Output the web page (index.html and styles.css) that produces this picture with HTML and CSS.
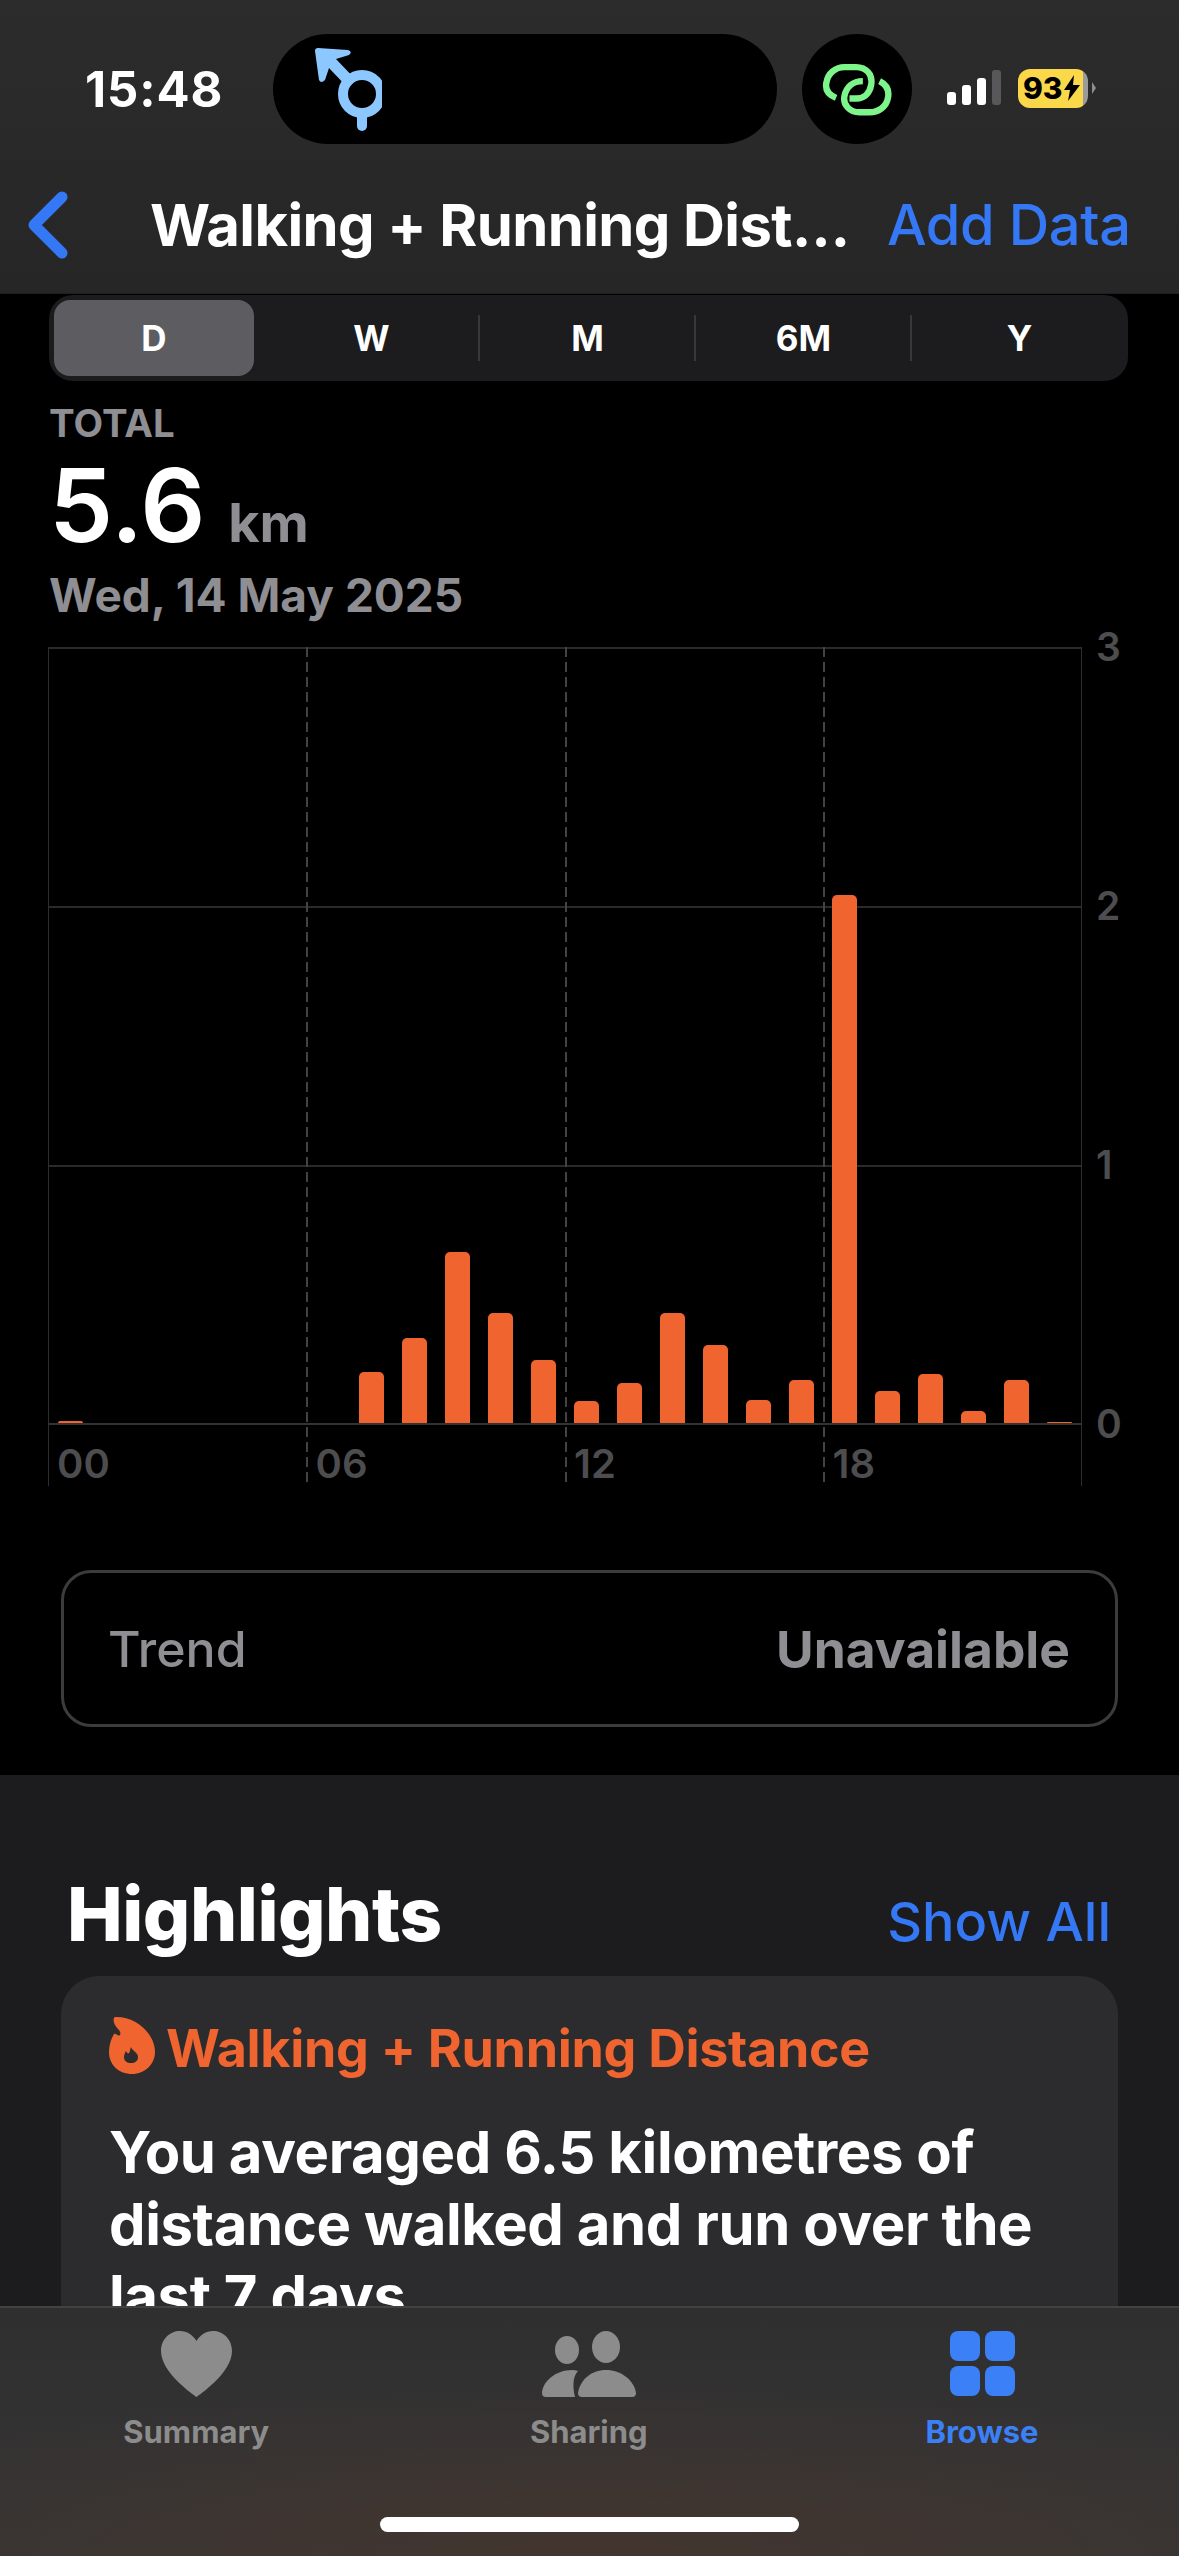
FILE: index.html
```html
<!doctype html>
<html lang="en">
<head>
  <meta charset="UTF-8" />
  <meta name="viewport" content="width=device-width, initial-scale=1.0" />
  <title>Walking + Running Distance</title>
  <link rel="stylesheet" href="styles.css">
</head>
<body>
  <div class="phone">
    <header class="top">
      <div class="status">
        <span class="time">15:48</span>
        <div class="island">
          <svg class="route-icon" width="70" height="100" viewBox="0 0 70 100">
            <path d="M6 2 L36 4 Q41 6 37 9 L24 13 L44 34 L36 42 L17 22 L13 34 Q9 38 7 34 L3 5 Q3 2 6 2Z" fill="#8cc8ff"/>
            <circle cx="50" cy="48" r="19" fill="none" stroke="#8cc8ff" stroke-width="10"/>
            <path d="M50 68 V80" stroke="#8cc8ff" stroke-width="10" stroke-linecap="round"/>
          </svg>
        </div>
        <div class="island-dot">
          <svg width="72" height="57" viewBox="120 120 215 170" fill="none" stroke="#7ef58b" stroke-width="19">
            <path d="M165 230 C140 220 132 205 136 185 C140 155 165 138 190 138 H225 C255 138 275 160 270 190 C266 215 250 232 225 232 H205"/>
            <path d="M295 180 C315 190 325 205 320 230 C315 258 290 273 265 273 H235 C205 273 185 250 190 225 C195 198 215 180 245 180"/>
          </svg>
        </div>
        <div class="signal">
          <span class="b1"></span><span class="b2"></span><span class="b3"></span><span class="b4"></span>
        </div>
        <div class="battery">
          <span>93</span>
          <svg width="16" height="26" viewBox="0 0 16 26"><path d="M10 0 L0 15 H6 L4 26 L16 10 H9 Z" fill="#000"/></svg>
        </div>
        <div class="battery-nub"></div>
      </div>
      <nav class="navbar">
        <svg class="back" width="42" height="68" viewBox="0 0 42 68" fill="none">
          <path d="M35 6 L7 34 L35 62" stroke="#3478f6" stroke-width="11" stroke-linecap="round" stroke-linejoin="round"/>
        </svg>
        <div class="nav-title">Walking + Running Dist…</div>
        <a class="nav-action">Add Data</a>
      </nav>
    </header>

    <main class="chart-area">
      <div class="seg">
        <div class="seg-item active">D</div>
        <div class="seg-item">W</div>
        <div class="seg-item sep">M</div>
        <div class="seg-item sep">6M</div>
        <div class="seg-item sep">Y</div>
      </div>

      <section class="summary">
        <div class="total-label">TOTAL</div>
        <div class="total-value">5.6 <span class="unit">km</span></div>
        <div class="total-date">Wed, 14 May 2025</div>
      </section>

      <section class="chart">
        <div class="plot">
          <div class="grid-line y3"></div>
          <div class="grid-line y2"></div>
          <div class="grid-line y1"></div>
          <div class="dash x6"></div>
          <div class="dash x12"></div>
          <div class="dash x18"></div>
          <div class="bars">
            <i style="height:2px"></i><i></i><i></i><i></i><i></i><i></i><i></i>
            <i style="height:51px"></i><i style="height:85px"></i><i style="height:171px"></i>
            <i style="height:110px"></i><i style="height:63px"></i><i style="height:22px"></i>
            <i style="height:40px"></i><i style="height:110px"></i><i style="height:78px"></i>
            <i style="height:23px"></i><i style="height:43px"></i><i style="height:528px"></i>
            <i style="height:32px"></i><i style="height:49px"></i><i style="height:12px"></i>
            <i style="height:43px"></i><i style="height:1px"></i>
          </div>
          <span class="y-label l3">3</span>
          <span class="y-label l2">2</span>
          <span class="y-label l1">1</span>
          <span class="y-label l0">0</span>
        </div>
        <div class="x-axis">
          <span>00</span><span>06</span><span>12</span><span>18</span>
        </div>
      </section>

      <section class="trend">
        <span class="trend-name">Trend</span>
        <span class="trend-value">Unavailable</span>
      </section>
    </main>

    <section class="highlights">
      <div class="hl-head">
        <h2>Highlights</h2>
        <a>Show All</a>
      </div>
      <article class="hl-card">
        <div class="hl-title">
          <svg width="46" height="58" viewBox="0 0 46 58">
            <path fill="#f0642f" fill-rule="evenodd" d="M6 1 C3 3 5 9 9 13 C11 15 12 17 11 19 C9 21 7 17 5 18 C2 23 0 29 0 36 C0 49 10 58 23 58 C36 58 46 48 46 36 C46 18 27 0 6 1Z M22 31 C23 35 29 36 29 41 C29 45 26 47 22 47 C18 47 15 45 15 41 C15 39 16 37 17 35 C18 37 19 38 20 37 C21 36 21 33 22 31Z"/>
          </svg>
          <span>Walking + Running Distance</span>
        </div>
        <p>You averaged 6.5 kilometres of distance walked and run over the last 7 days.</p>
      </article>
    </section>

    <footer class="tabbar">
      <div class="tab">
        <svg width="71" height="66" viewBox="0 0 71 66">
          <path fill="#8c8c8c" d="M35.5 66 C33 64 0 42 0 20 C0 8 9 0 19 0 C26 0 32 4 35.5 10 C39 4 45 0 52 0 C62 0 71 8 71 20 C71 42 38 64 35.5 66Z"/>
        </svg>
        <span>Summary</span>
      </div>
      <div class="tab">
        <svg width="94" height="66" viewBox="0 0 94 66">
          <g fill="#8c8c8c">
            <ellipse cx="25" cy="19" rx="12" ry="14"/>
            <ellipse cx="64" cy="16" rx="14" ry="16"/>
            <path d="M4 66 Q0 66 0 62 C1 50 14 39 30 39 Q33 39 36 40 C30 46 31 58 33 66Z"/>
            <path d="M40 66 Q36 66 36 62 C38 49 49 39 64 39 C79 39 92 49 94 62 Q94 66 90 66Z"/>
          </g>
        </svg>
        <span>Sharing</span>
      </div>
      <div class="tab current">
        <div class="tiles"><b></b><b></b><b></b><b></b></div>
        <span>Browse</span>
      </div>
      <div class="home-bar"></div>
    </footer>
  </div>
</body>
</html>
```

FILE: styles.css
```css
* { box-sizing: border-box; }
html, body { margin: 0; padding: 0; background: #000; }
body {
  font-family: Inter, "Liberation Sans", sans-serif;
  color: #fff;
}
.phone {
  position: relative;
  width: 1179px;
  height: 2556px;
  overflow: hidden;
  background: #1c1c1e;
}

/* top bar */
.top {
  height: 294px;
  background: linear-gradient(#2c2c2c, #262627);
  border-bottom: 1px solid #1f1f20;
}
.status { display: flex; align-items: center; height: 178px; }
.time { font-size: 49px; font-weight: 700; width: 273px; padding-left: 85px; letter-spacing: .9px; }
.island {
  width: 504px;
  height: 110px;
  border-radius: 55px;
  background: #000;
  display: flex;
  align-items: center;
}
.route-icon { margin-left: 39px; margin-top: 14px; }
.island-dot {
  width: 110px;
  height: 110px;
  margin-left: 25px;
  border-radius: 50%;
  background: #000;
  display: flex;
  align-items: center;
  justify-content: center;
}
.signal { display: flex; align-items: flex-end; gap: 6px; margin-left: 35px; margin-top: -3px; }
.signal span { width: 9px; border-radius: 3px; background: #fff; }
.signal .b1 { height: 13px; }
.signal .b2 { height: 20px; }
.signal .b3 { height: 27px; }
.signal .b4 { height: 35px; background: #58585a; }
.battery {
  display: flex;
  align-items: center;
  gap: 1px;
  width: 70px;
  height: 39px;
  margin-left: 17px;
  margin-top: -2px;
  padding-left: 5px;
  border-radius: 12px;
  background: linear-gradient(90deg, #fbd84a 93%, #9a9a9a 93%);
  color: #000;
  font-size: 30px;
  font-weight: 800;
}
.battery-nub {
  width: 0;
  height: 0;
  margin-left: 4px;
  margin-top: -2px;
  border-left: 4px solid #8e8e8e;
  border-top: 6px solid transparent;
  border-bottom: 6px solid transparent;
}
.navbar { display: flex; align-items: center; height: 94px; padding-left: 27px; }
.back { flex: none; }
.nav-title {
  width: 737px;
  margin-left: 81px;
  font-size: 58px;
  font-weight: 700;
  letter-spacing: -.6px;
  white-space: nowrap;
}
.nav-action { font-size: 56px; font-weight: 500; color: #3478f6; white-space: nowrap; letter-spacing: -.4px; }

/* black chart section */
.chart-area { background: #000; height: 1481px; padding-top: 1px; }
.seg {
  display: grid;
  grid-template-columns: repeat(5, 216px);
  width: 1079px;
  height: 86px;
  margin-left: 49px;
  border-radius: 24px;
  background: #1c1c1e;
}
.seg-item {
  position: relative;
  display: flex;
  align-items: center;
  justify-content: center;
  margin-left: -3px;
  font-size: 35px;
  font-weight: 700;
}
.seg-item.active {
  width: 200px;
  height: 76px;
  margin: 5px 0 0 5px;
  border-radius: 16px;
  background: #5d5d61;
}
.seg-item.sep::before {
  content: "";
  position: absolute;
  left: 0;
  top: 20px;
  width: 2px;
  height: 46px;
  background: #38383a;
}

.summary { padding: 20px 0 0 49px; }
.total-label { font-size: 38.5px; line-height: 44px; font-weight: 700; color: #8e8e93; }
.total-value { font-size: 102px; line-height: 110px; font-weight: 600; margin-top: 5px; }
.unit { font-size: 54px; font-weight: 700; color: #8e8e93; margin-left: -3px; }
.total-date { font-size: 46px; line-height: 52px; font-weight: 700; color: #8e8e93; margin-top: -9px; }

.chart { margin: 26px 0 0 48px; width: 1034px; }
.plot {
  position: relative;
  height: 778px;
  border-left: 1px solid #2e2e30;
  border-right: 1px solid #2e2e30;
  border-bottom: 2px solid #333335;
}
.grid-line { position: absolute; left: 0; right: 0; height: 2px; background: #2a2a2c; }
.grid-line.y3 { top: 0; }
.grid-line.y2 { top: 259px; }
.grid-line.y1 { top: 518px; }
.dash {
  position: absolute;
  top: 0;
  bottom: -63px;
  width: 2px;
  background: repeating-linear-gradient(#434345 0 10px, transparent 10px 15px);
}
.dash.x6 { left: 257px; }
.dash.x12 { left: 516px; }
.dash.x18 { left: 774px; }
.bars {
  position: absolute;
  inset: 0;
  display: grid;
  grid-template-columns: repeat(24, 1fr);
  align-items: end;
  justify-items: center;
}
.bars i { display: block; width: 25px; background: #f0642f; border-radius: 5px 5px 0 0; }
.y-label {
  position: absolute;
  left: 1047px;
  font-size: 39px;
  line-height: 46px;
  font-weight: 600;
  color: #4d4d4f;
}
.y-label.l3 { top: -23px; }
.y-label.l2 { top: 236px; }
.y-label.l1 { top: 495px; }
.y-label.l0 { top: 754px; }
.x-axis {
  display: grid;
  grid-template-columns: repeat(4, 258.5px);
  height: 61px;
  border-left: 1px solid #2e2e30;
  border-right: 1px solid #2e2e30;
}
.x-axis span { padding: 16px 0 0 8px; font-size: 40px; line-height: 46px; font-weight: 600; color: #4d4d4f; }

.trend {
  display: flex;
  align-items: center;
  justify-content: space-between;
  width: 1057px;
  height: 157px;
  margin: 84px 0 0 61px;
  padding: 0 45px 0 44px;
  border: 3px solid #3c3c3e;
  border-radius: 30px;
  font-size: 50px;
  font-weight: 500;
  color: #8e8e93;
}
.trend-value { font-size: 51.5px; font-weight: 700; }

/* highlights */
.highlights { padding: 0 61px; }
.hl-head { display: flex; align-items: baseline; justify-content: space-between; padding: 94px 7px 0 6px; height: 201px; }
.hl-head h2 { margin: 0; font-size: 74.5px; font-weight: 800; letter-spacing: -.5px; }
.hl-head a { font-size: 54px; font-weight: 500; color: #3478f6; }
.hl-card { height: 500px; padding: 40px 30px 0 48px; border-radius: 38px; background: #2c2c2e; }
.hl-title { display: flex; align-items: flex-start; gap: 11px; color: #f0642f; font-size: 52px; line-height: 58px; font-weight: 700; letter-spacing: -.3px; }
.hl-title span { margin-top: 4px; }
.hl-card p { margin: 38px 0 0; font-size: 58px; line-height: 72px; font-weight: 700; letter-spacing: -.4px; }

/* bottom tabs */
.tabbar {
  position: absolute;
  left: 0;
  right: 0;
  bottom: 0;
  height: 250px;
  display: grid;
  grid-template-columns: 392.5px 392.5px 394px;
  border-top: 2px solid #424244;
  background: radial-gradient(900px 180px at 50% 100%, #43352f, transparent 100%), linear-gradient(#2f2f30, #353535);
}
.tab {
  display: flex;
  flex-direction: column;
  align-items: center;
  height: 130px;
  padding-top: 23px;
  color: #8c8c8c;
  font-size: 31px;
  font-weight: 700;
}
.tab svg, .tiles { height: 66px; flex: none; }
.tab span { margin-top: 17px; line-height: 36px; }
.tab.current { color: #3b80f6; }
.tiles { display: grid; grid-template-columns: 30px 30px; grid-template-rows: 30px 30px; gap: 5px; }
.tiles b { background: #3b80f6; border-radius: 8px; }
.home-bar {
  position: absolute;
  left: 380px;
  top: 209px;
  width: 419px;
  height: 15px;
  border-radius: 8px;
  background: #fff;
}
```
